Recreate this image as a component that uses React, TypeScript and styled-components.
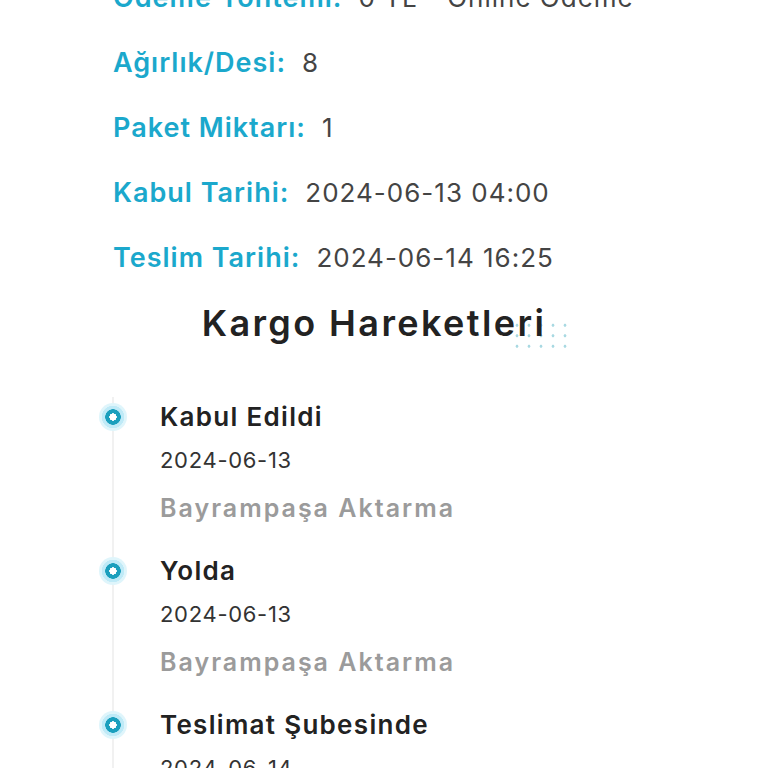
import styled, { createGlobalStyle } from "styled-components";

const GlobalStyle = createGlobalStyle`
  html, body {
    margin: 0;
    padding: 0;
    background: #ffffff;
    font-family: Inter, "Noto Sans", sans-serif;
    overflow: hidden;
  }
`;

const Page = styled.div`
  width: 768px;
  height: 768px;
  overflow: hidden;
  padding-left: 113px;
  box-sizing: border-box;
`;

const InfoList = styled.div`
  margin-top: -35px;
  display: flex;
  flex-direction: column;
`;

const InfoRow = styled.div`
  height: 65px;
  display: flex;
  align-items: center;
  gap: 16px;
  white-space: nowrap;
`;

const Label = styled.span`
  color: #1ba8cc;
  font-size: 27px;
  font-weight: 600;
  letter-spacing: 1px;
`;

const Value = styled.span`
  color: #444444;
  font-size: 26px;
  font-weight: 400;
  letter-spacing: 1px;
`;

const TitleBox = styled.div`
  width: 522px;
  height: 66px;
  display: flex;
  justify-content: center;
  align-items: center;
`;

const Title = styled.h2`
  position: relative;
  margin: 0;
  font-size: 36px;
  line-height: 44px;
  font-weight: 600;
  color: #222222;
  letter-spacing: 2.4px;
`;

const TitleText = styled.span`
  position: relative;
  z-index: 1;
`;

const Dots = styled.span`
  position: absolute;
  right: -25px;
  top: 19px;
  width: 60px;
  height: 31.5px;
  background-image: radial-gradient(circle, #a9d9e2 1.3px, transparent 1.7px);
  background-size: 12px 10.5px;
  z-index: 0;
`;

const Timeline = styled.div`
  margin-top: 41px;
  margin-left: -1px;
  border-left: 2px solid #f1f1f1;
  padding-left: 46px;
  display: flex;
  flex-direction: column;
`;

const Item = styled.div`
  position: relative;
  height: 154px;
  display: flex;
  flex-direction: column;
`;

const Marker = styled.span`
  position: absolute;
  left: -61px;
  top: 6px;
  width: 28px;
  height: 28px;
  border-radius: 50%;
  background: radial-gradient(circle, #ffffff 0 3.5px, #1b9fbd 3.8px 7.5px, #bfeaf7 8px 11px, #dff5fb 11.5px 14px);
`;

const ItemTitle = styled.div`
  height: 40px;
  line-height: 40px;
  font-size: 26px;
  font-weight: 600;
  color: #222222;
  letter-spacing: 1.3px;
`;

const ItemDate = styled.div`
  margin-top: 8px;
  height: 30px;
  line-height: 30px;
  font-size: 22px;
  font-weight: 400;
  color: #333333;
  letter-spacing: 0.7px;
`;

const ItemPlace = styled.div`
  margin-top: 16px;
  height: 34px;
  line-height: 34px;
  font-size: 25px;
  font-weight: 600;
  color: #9b9b9b;
  letter-spacing: 2px;
`;

const info = [
  ["Ödeme Yöntemi:", "0 TL - Online Ödeme"],
  ["Ağırlık/Desi:", "8"],
  ["Paket Miktarı:", "1"],
  ["Kabul Tarihi:", "2024-06-13 04:00"],
  ["Teslim Tarihi:", "2024-06-14 16:25"],
];

const moves = [
  { title: "Kabul Edildi", date: "2024-06-13", place: "Bayrampaşa Aktarma" },
  { title: "Yolda", date: "2024-06-13", place: "Bayrampaşa Aktarma" },
  { title: "Teslimat Şubesinde", date: "2024-06-14", place: "Bayrampaşa Aktarma" },
];

function App() {
  return (
    <>
      <GlobalStyle />
      <Page>
        <InfoList>
          {info.map(([l, v]) => (
            <InfoRow key={l}>
              <Label>{l}</Label>
              <Value>{v}</Value>
            </InfoRow>
          ))}
        </InfoList>
        <TitleBox>
          <Title>
            <Dots />
            <TitleText>Kargo Hareketleri</TitleText>
          </Title>
        </TitleBox>
        <Timeline>
          {moves.map((m) => (
            <Item key={m.title}>
              <Marker />
              <ItemTitle>{m.title}</ItemTitle>
              <ItemDate>{m.date}</ItemDate>
              <ItemPlace>{m.place}</ItemPlace>
            </Item>
          ))}
        </Timeline>
      </Page>
    </>
  );
}

export default App;
